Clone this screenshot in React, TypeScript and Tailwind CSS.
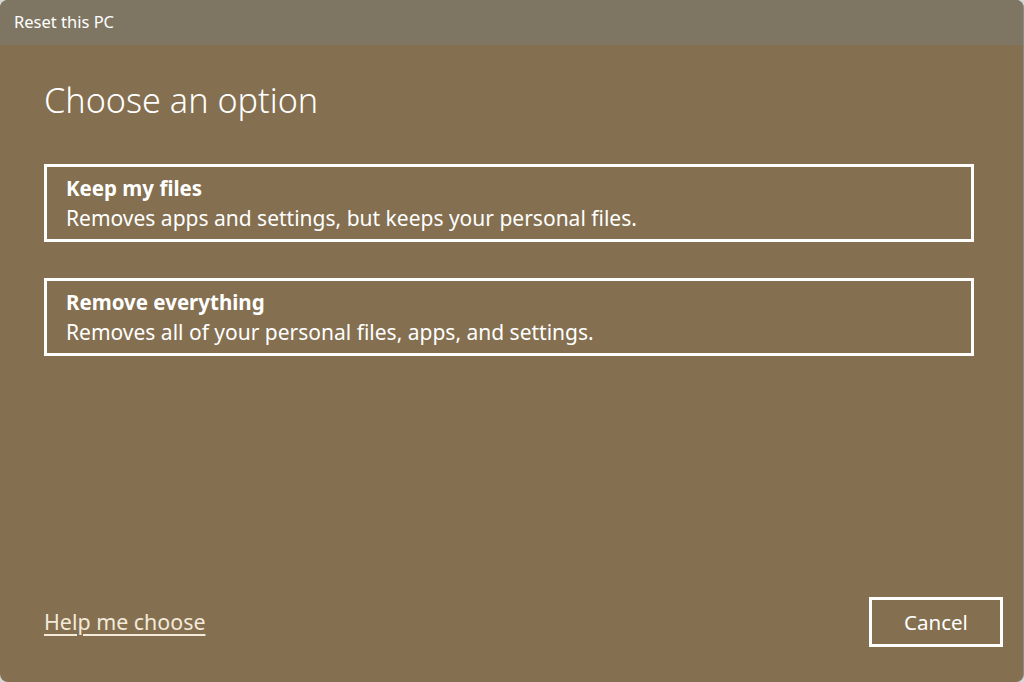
import React from "react";

const font = { fontFamily: '"Noto Sans", "Open Sans", sans-serif' };

function OptionCard({ title, desc }: { title: string; desc: string }) {
  return (
    <button className="flex h-[78px] w-full flex-col items-start justify-center border-[3px] border-white px-[19px] text-left text-white">
      <span className="text-[20.5px] font-bold leading-[30px]">{title}</span>
      <span className="text-[21px] leading-[30px]">{desc}</span>
    </button>
  );
}

export default function App() {
  return (
    <div className="h-[682px] w-[1024px] bg-[#d6d6d6]" style={font}>
      <div className="flex h-full w-full flex-col overflow-hidden rounded-[8px] border-r border-[#8a8a8a] bg-[#846f50]">
        <div className="flex h-[45px] shrink-0 items-center bg-[#7e7663] px-[14px] text-[16.5px] text-white">
          Reset this PC
        </div>
        <div className="flex flex-1 flex-col pl-[44px] pr-[49px]">
          <h1 className="mt-[33px] text-[34.2px] font-light leading-[44px] text-white">Choose an option</h1>
          <div className="mt-[42px] flex flex-col gap-[36px]">
            <OptionCard title="Keep my files" desc="Removes apps and settings, but keeps your personal files." />
            <OptionCard title="Remove everything" desc="Removes all of your personal files, apps, and settings." />
          </div>
          <div className="mt-auto mb-[35px] flex items-center justify-between">
            <a className="text-[21.4px] text-[#f3ead9] underline underline-offset-[4px]">Help me choose</a>
            <button className="-mr-[29px] h-[50px] w-[134px] border-[3px] border-white text-[20.5px] text-white">
              Cancel
            </button>
          </div>
        </div>
      </div>
    </div>
  );
}
